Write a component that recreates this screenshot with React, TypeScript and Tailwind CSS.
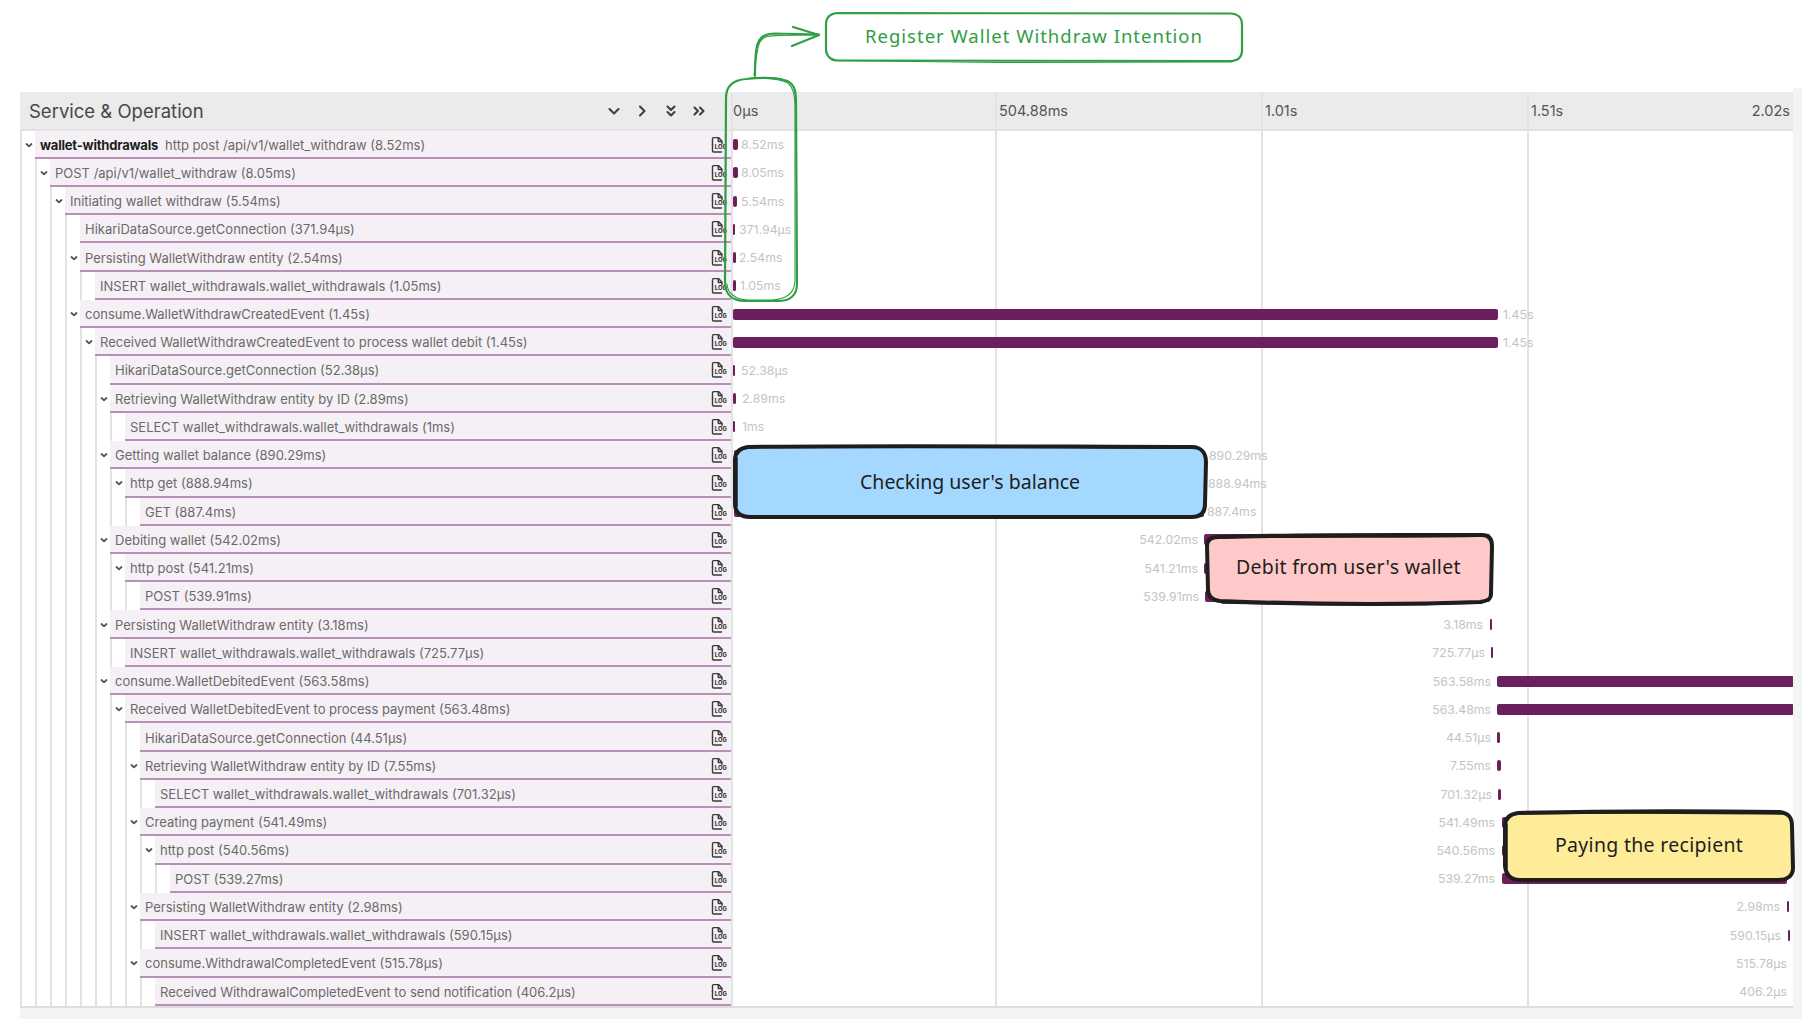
import React from "react";

type Row = {
  d: number;
  name: string;
  service?: string;
  time: string;
  leaf?: boolean;
  x: number;
  w: number;
  labelEnd?: number;
  labelStart?: number;
};

const CHART_X = 733;

const rows: Row[] = [
  { d: 0, service: "wallet-withdrawals", name: "http post /api/v1/wallet_withdraw", time: "8.52ms", x: 733, w: 5, labelStart: 741 },
  { d: 1, name: "POST /api/v1/wallet_withdraw", time: "8.05ms", x: 733, w: 5, labelStart: 741 },
  { d: 2, name: "Initiating wallet withdraw", time: "5.54ms", x: 733, w: 4, labelStart: 741 },
  { d: 3, name: "HikariDataSource.getConnection", time: "371.94µs", leaf: true, x: 733, w: 2, labelStart: 739 },
  { d: 3, name: "Persisting WalletWithdraw entity", time: "2.54ms", x: 733, w: 3, labelStart: 739 },
  { d: 4, name: "INSERT wallet_withdrawals.wallet_withdrawals", time: "1.05ms", leaf: true, x: 733, w: 3, labelStart: 740 },
  { d: 3, name: "consume.WalletWithdrawCreatedEvent", time: "1.45s", x: 733, w: 765, labelStart: 1503 },
  { d: 4, name: "Received WalletWithdrawCreatedEvent to process wallet debit", time: "1.45s", x: 733, w: 765, labelStart: 1503 },
  { d: 5, name: "HikariDataSource.getConnection", time: "52.38µs", leaf: true, x: 733, w: 2, labelStart: 741 },
  { d: 5, name: "Retrieving WalletWithdraw entity by ID", time: "2.89ms", x: 733, w: 3, labelStart: 742 },
  { d: 6, name: "SELECT wallet_withdrawals.wallet_withdrawals", time: "1ms", leaf: true, x: 733, w: 2, labelStart: 742 },
  { d: 5, name: "Getting wallet balance", time: "890.29ms", x: 734, w: 470, labelStart: 1209 },
  { d: 6, name: "http get", time: "888.94ms", x: 734, w: 470, labelStart: 1208 },
  { d: 7, name: "GET", time: "887.4ms", leaf: true, x: 734, w: 470, labelStart: 1207 },
  { d: 5, name: "Debiting wallet", time: "542.02ms", x: 1204, w: 286, labelEnd: 1198 },
  { d: 6, name: "http post", time: "541.21ms", x: 1204, w: 286, labelEnd: 1198 },
  { d: 7, name: "POST", time: "539.91ms", leaf: true, x: 1205, w: 285, labelEnd: 1199 },
  { d: 5, name: "Persisting WalletWithdraw entity", time: "3.18ms", x: 1490, w: 2, labelEnd: 1483 },
  { d: 6, name: "INSERT wallet_withdrawals.wallet_withdrawals", time: "725.77µs", leaf: true, x: 1491, w: 2, labelEnd: 1485 },
  { d: 5, name: "consume.WalletDebitedEvent", time: "563.58ms", x: 1497, w: 297, labelEnd: 1491 },
  { d: 6, name: "Received WalletDebitedEvent to process payment", time: "563.48ms", x: 1497, w: 297, labelEnd: 1491 },
  { d: 7, name: "HikariDataSource.getConnection", time: "44.51µs", leaf: true, x: 1497, w: 3, labelEnd: 1491 },
  { d: 7, name: "Retrieving WalletWithdraw entity by ID", time: "7.55ms", x: 1497, w: 4, labelEnd: 1491 },
  { d: 8, name: "SELECT wallet_withdrawals.wallet_withdrawals", time: "701.32µs", leaf: true, x: 1498, w: 3, labelEnd: 1492 },
  { d: 7, name: "Creating payment", time: "541.49ms", x: 1502, w: 285, labelEnd: 1495 },
  { d: 8, name: "http post", time: "540.56ms", x: 1502, w: 285, labelEnd: 1495 },
  { d: 9, name: "POST", time: "539.27ms", leaf: true, x: 1502, w: 285, labelEnd: 1495 },
  { d: 7, name: "Persisting WalletWithdraw entity", time: "2.98ms", x: 1787, w: 2, labelEnd: 1780 },
  { d: 8, name: "INSERT wallet_withdrawals.wallet_withdrawals", time: "590.15µs", leaf: true, x: 1788, w: 2, labelEnd: 1781 },
  { d: 7, name: "consume.WithdrawalCompletedEvent", time: "515.78µs", x: 1793, w: 0, labelEnd: 1787 },
  { d: 8, name: "Received WithdrawalCompletedEvent to send notification", time: "406.2µs", leaf: true, x: 1793, w: 0, labelEnd: 1787 },
];

function Chevron() {
  return (
    <svg width="10" height="10" viewBox="0 0 10 10" fill="none" stroke="#555" strokeWidth="1.8" strokeLinecap="round" strokeLinejoin="round">
      <path d="M2.5 4l2.5 2.4L7.5 4" />
    </svg>
  );
}

function LogIcon() {
  return (
    <svg width="19" height="18" viewBox="0 0 19 18" fill="none" className="shrink-0">
      <path d="M2.5 8.5V2.6c0-.6.4-1 1-1h5l3.5 3.6v2.6" stroke="#3a3a3a" strokeWidth="1.4" strokeLinejoin="round" strokeLinecap="round" />
      <path d="M8.3 1.8v3.7H12" stroke="#3a3a3a" strokeWidth="1.4" strokeLinejoin="round" />
      <path d="M2.5 8v7c0 .6.4 1 1 1h8" stroke="#3a3a3a" strokeWidth="1.4" strokeLinecap="round" />
      <text x="4.8" y="12.8" fontSize="5.8" fontWeight="800" fill="#3a3a3a" fontFamily="Inter, sans-serif">
        LOG
      </text>
    </svg>
  );
}

function HeaderIcon({ d }: { d: string }) {
  return (
    <svg width="16" height="16" viewBox="0 0 16 16" fill="none" stroke="#3f3f3f" strokeWidth="2.1" strokeLinecap="round" strokeLinejoin="round">
      <path d={d} />
    </svg>
  );
}

function ServiceRow({ row }: { row: Row }) {
  return (
    <div className="flex h-[28.24px] w-full">
      {Array.from({ length: row.d }).map((_, i) => (
        <div key={i} className="h-full w-[15px] shrink-0 border-l-2 border-[#e3e3e3]" />
      ))}
      <div className="flex h-full w-[15px] shrink-0 items-center justify-center border-l-2 border-[#e3e3e3] bg-white">
        {!row.leaf && <Chevron />}
      </div>
      <div className="flex h-full min-w-0 flex-1 items-center justify-between border-b-2 border-[#b88fb6] bg-[#f5f0f5] pt-[2px] pr-[2px] pl-[5px]">
        <div className="text-[13px] leading-[16px] whitespace-nowrap text-[#6a6a6a]">
          {row.service && <span className="mr-[7px] font-bold tracking-[-0.2px] text-[#1c1c1c]">{row.service}</span>}
          {row.name} ({row.time})
        </div>
        <LogIcon />
      </div>
    </div>
  );
}

function ChartRow({ row }: { row: Row }) {
  const offset = row.x - CHART_X;
  return (
    <div className="flex h-[28.24px] w-full items-center">
      <div className="flex shrink-0 justify-end" style={{ width: offset }}>
        {row.labelEnd !== undefined && (
          <span className="pt-px text-[12.3px] leading-[16px] whitespace-nowrap text-[#c4c4c4]" style={{ marginRight: row.x - row.labelEnd }}>
            {row.time}
          </span>
        )}
      </div>
      {row.w > 0 && <div className="h-[11px] shrink-0 rounded-[2px] bg-[#6b1f5f]" style={{ width: row.w }} />}
      {row.labelStart !== undefined && (
        <span className="pt-px text-[12.3px] leading-[16px] whitespace-nowrap text-[#c4c4c4]" style={{ marginLeft: row.labelStart - row.x - row.w }}>
          {row.time}
        </span>
      )}
    </div>
  );
}

const hand = "'Noto Sans', 'DejaVu Sans', sans-serif";

function Annotations() {
  return (
    <>
      <svg className="pointer-events-none absolute top-0 left-0" width="1814" height="1030" viewBox="0 0 1814 1030" fill="none" strokeLinecap="round" strokeLinejoin="round">
        {/* green outline round the first rows */}
        <g stroke="#2f9e44" strokeWidth="2.2">
          <path d="M746 79C765 77 778 78 784 80C794 82 796 90 796 102L797 284C797 295 790 301 778 301L745 301C732 301 725 294 725 282L726 98C726 86 733 80 746 79Z" />
          <path d="M750 78C770 78 780 79 788 83C794 88 795 96 795 106L795 280C795 292 788 299 772 300L748 300C735 300 727 292 727 284" strokeWidth="1.1" />
          {/* arrow */}
          <path d="M755 76C755 62 755 50 758 43C761 36 766 34 774 33.5L819 34.5" />
          <path d="M754 75C756 60 757 47 760 42C764 35 770 36 780 35.5L817 35" strokeWidth="1.1" />
          <path d="M793 27L819 35L792 46" />
          {/* box */}
          <path d="M838 13L1230 13.5C1238 13.5 1242 18 1242 25L1242 50C1242 57 1238 61 1230 61L838 60.5C831 60.5 826 56 826 49L826 24C826 17 831 13 838 13Z" />
          <path d="M832 60.5L1000 62.5L1232 62" strokeWidth="1.1" />
        </g>
        {/* blue */}
        <path
          d="M748 447C900 445 1080 447 1192 447C1201 447 1206 453 1206 462L1205 504C1205 513 1200 517 1192 517L750 517C741 517 735 513 735 504L735 460C735 452 740 448 748 447Z"
          fill="#a5d8ff"
          stroke="#1e1e1e"
          strokeWidth="4"
        />
        <path d="M745 447.5C900 446 1080 448 1196 448M737 458L737 506" stroke="#1e1e1e" strokeWidth="1.5" />
        {/* pink */}
        <path
          d="M1218 537C1300 534 1420 535 1482 535C1489 535 1492 539 1492 546L1491 594C1491 600 1486 601 1480 602C1400 605 1300 604 1220 601C1212 600 1208 596 1208 590L1207 546C1207 540 1211 537 1218 537Z"
          fill="#ffc9c9"
          stroke="#1e1e1e"
          strokeWidth="4"
        />
        <path d="M1222 538C1300 536 1420 538 1486 536M1222 603C1300 605 1400 606 1482 603" stroke="#1e1e1e" strokeWidth="1.5" />
        {/* yellow */}
        <path
          d="M1518 813C1600 811 1700 811 1780 812C1788 813 1792 817 1792 826L1793 868C1793 876 1787 880 1778 880L1520 880C1511 880 1506 875 1505 866L1505 826C1505 818 1510 814 1518 813Z"
          fill="#ffec99"
          stroke="#1e1e1e"
          strokeWidth="4"
        />
        <path d="M1520 814C1600 812 1700 813 1784 814M1507 824L1507 868" stroke="#1e1e1e" strokeWidth="1.5" />
      </svg>
      <div className="absolute top-[23px] left-[865px] text-[18.5px] leading-[26px] tracking-[1px] whitespace-nowrap text-[#2f9e44]" style={{ fontFamily: hand }}>
        Register Wallet Withdraw Intention
      </div>
      <div className="absolute top-[468px] left-[860px] text-[19.5px] leading-[28px] whitespace-nowrap text-[#1e1e1e]" style={{ fontFamily: hand }}>
        Checking user's balance
      </div>
      <div className="absolute top-[553px] left-[1236px] text-[19.5px] leading-[28px] tracking-[0.3px] whitespace-nowrap text-[#1e1e1e]" style={{ fontFamily: hand }}>
        Debit from user's wallet
      </div>
      <div className="absolute top-[831px] left-[1555px] text-[19.5px] leading-[28px] tracking-[0.3px] whitespace-nowrap text-[#1e1e1e]" style={{ fontFamily: hand }}>
        Paying the recipient
      </div>
    </>
  );
}

export default function App() {
  return (
    <div className="relative h-[1030px] w-[1814px] overflow-hidden bg-white" style={{ fontFamily: "Inter, sans-serif" }}>
      <div className="pt-[88px] pl-[20px]">
        <div className="flex w-[1782px]">
          <div className="w-[1773px] shrink-0 pt-[4px]">
            {/* header */}
            <div className="flex h-[38.5px] border-b-2 border-[#e2e2e2] bg-[#ebebeb]">
              <div className="flex w-[711px] shrink-0 items-center justify-between pt-px pr-[24px] pl-[9px]">
                <span className="text-[18.5px] leading-[24px] text-[#484848]">Service &amp; Operation</span>
                <div className="flex items-center gap-[12.5px]">
                  <HeaderIcon d="M3.5 6l4.5 4.5L12.5 6" />
                  <HeaderIcon d="M6 3.5l4.5 4.5L6 12.5" />
                  <HeaderIcon d="M4.5 3.5L8 7l3.5-3.5M4.5 9L8 12.5L11.5 9" />
                  <HeaderIcon d="M3.5 4.5L7 8l-3.5 3.5M9 4.5L12.5 8L9 11.5" />
                </div>
              </div>
              <div className="grid flex-1 grid-cols-[264px_266px_266px_1fr] pt-px text-[14.5px] leading-[20px] text-[#555]">
                <div className="flex items-center border-l-2 border-[#e3e3e3]">0µs</div>
                <div className="flex items-center border-l-2 border-[#e3e3e3] pl-[2px]">504.88ms</div>
                <div className="flex items-center border-l-2 border-[#e3e3e3] pl-[2px]">1.01s</div>
                <div className="flex items-center justify-between border-l-2 border-[#e3e3e3] pr-[3px] pl-[2px]">
                  <span>1.51s</span>
                  <span>2.02s</span>
                </div>
              </div>
            </div>
            {/* body */}
            <div className="flex border-b-2 border-[#dedede] bg-white">
              <div className="w-[711px] shrink-0">
                {rows.map((r, i) => (
                  <ServiceRow key={i} row={r} />
                ))}
              </div>
              <div className="flex-1 border-l-2 border-[#e3e3e3] bg-[linear-gradient(to_right,#e3e3e3_2px,transparent_2px)] bg-[length:266px_100%] bg-[position:262px_0]">
                {rows.map((r, i) => (
                  <ChartRow key={i} row={r} />
                ))}
              </div>
            </div>
            <div className="h-[11px] bg-[#f3f5f5]" />
          </div>
          <div className="w-[9px] shrink-0 bg-[#f3f5f5]" />
        </div>
      </div>
      <Annotations />
    </div>
  );
}
